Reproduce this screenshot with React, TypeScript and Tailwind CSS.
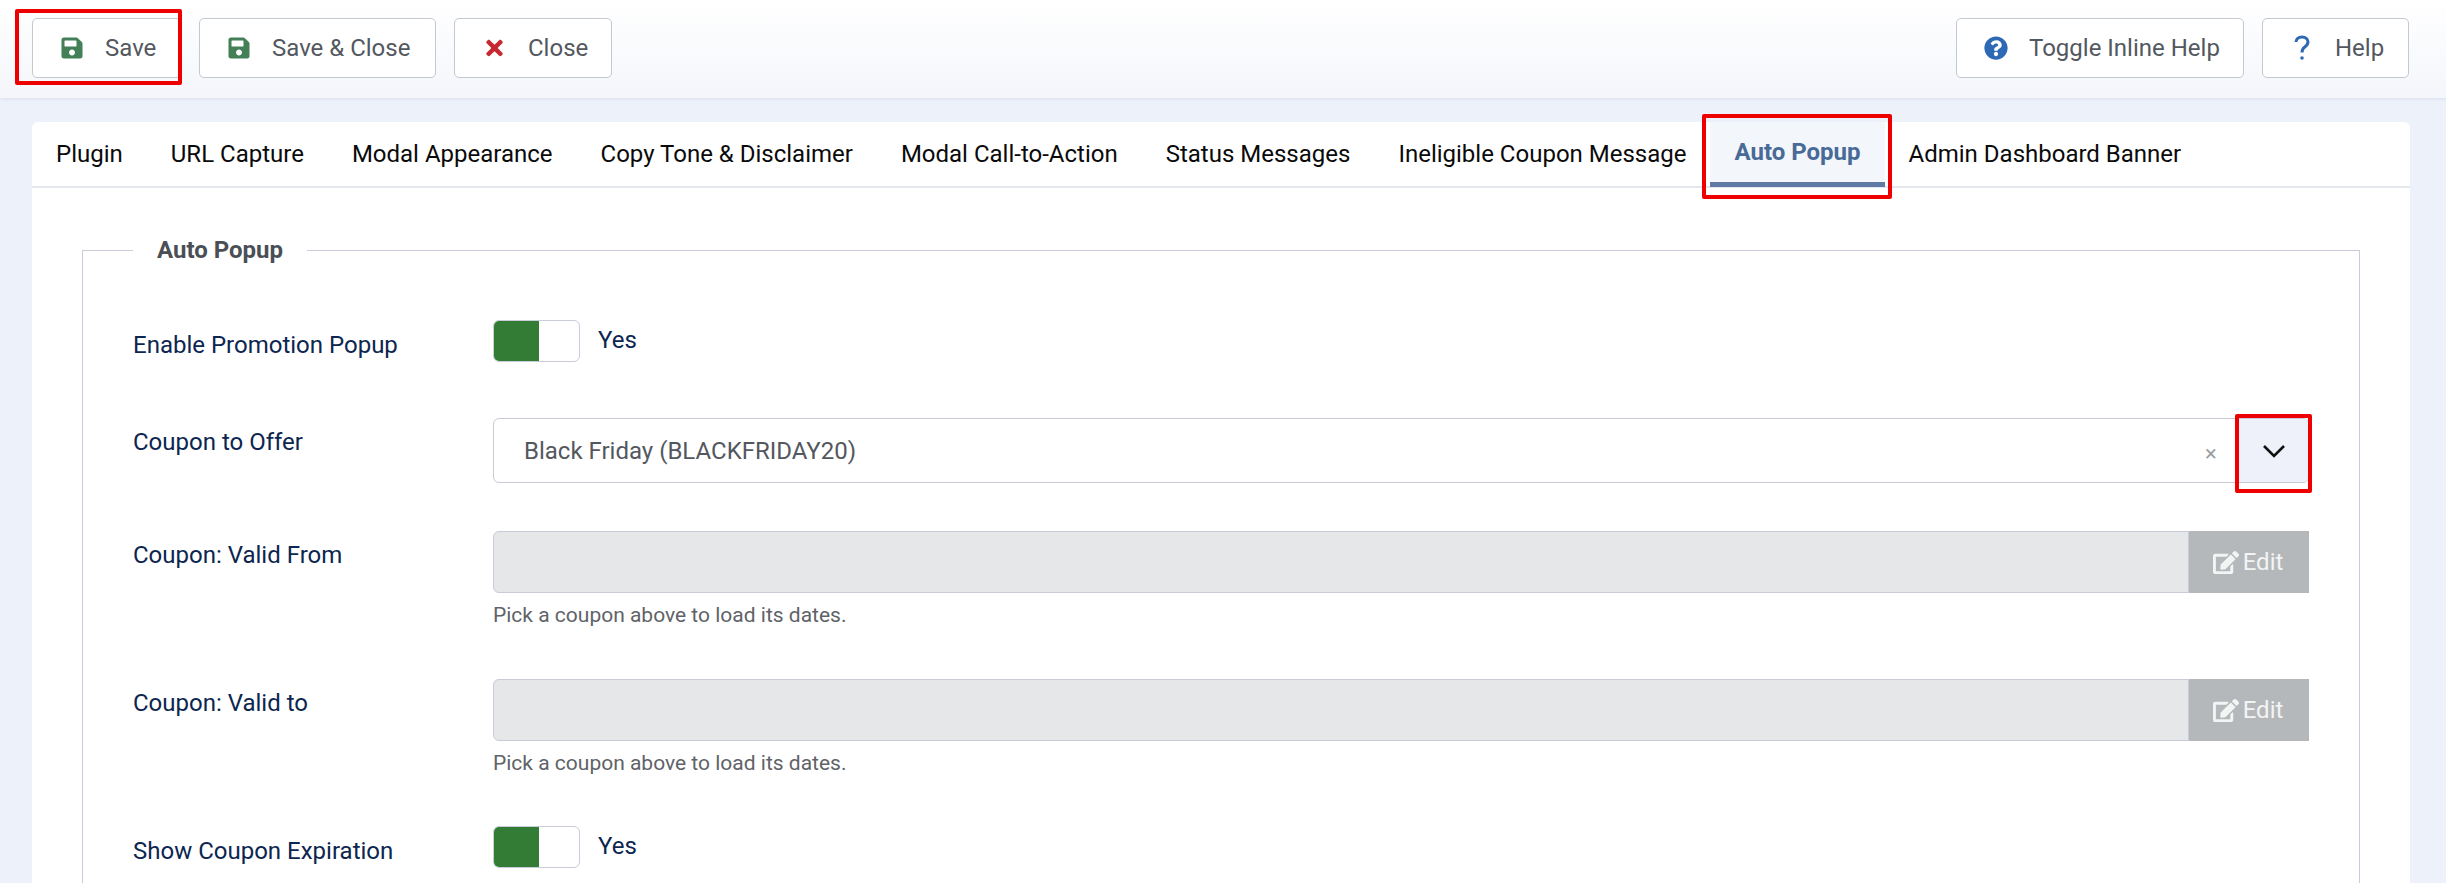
import { FaSave, FaTimes, FaQuestionCircle, FaEdit } from 'react-icons/fa';

const tabs = ['Plugin', 'URL Capture', 'Modal Appearance', 'Copy Tone & Disclaimer', 'Modal Call-to-Action', 'Status Messages', 'Ineligible Coupon Message', 'Auto Popup', 'Admin Dashboard Banner'];

function ToolButton({ icon, label, className }: { icon: React.ReactNode; label: string; className: string }) {
  return (
    <button className={`h-[60px] flex items-center border border-[#c4c8cf] rounded-[5px] bg-white text-[24px] text-[#53585f] ${className}`}>
      {icon}
      <span>{label}</span>
    </button>
  );
}

function Toggle() {
  return (
    <div className="flex items-start">
      <div className="w-[87px] h-[42px] flex rounded-[6px] border border-[#c8cdd9] bg-white overflow-hidden">
        <div className="w-[45px] h-full bg-[#337c36]" />
      </div>
      <span className="ml-[18px] text-[24px] leading-[40px] text-[#0c2650]">Yes</span>
    </div>
  );
}

function DateInput() {
  return (
    <div>
      <div className="flex h-[62px]">
        <div className="flex-1 bg-[#e6e7e8] border border-[#c8cbd6] rounded-l-[6px]" />
        <div className="w-[120px] bg-[#b5b8ba] flex items-center justify-center gap-[4px] pr-[2px] text-[24px] text-[#f3f4f4]">
          <FaEdit className="w-[26px] h-[25px]" />
          <span>Edit</span>
        </div>
      </div>
      <p className="mt-[9px] text-[21px] leading-[26px] text-[#5f6368]">Pick a coupon above to load its dates.</p>
    </div>
  );
}

export default function App() {
  return (
    <div className="h-[883px] overflow-hidden bg-[#edf1fa] font-['Roboto',sans-serif] relative">
      <header className="h-[98px] flex items-center justify-between pl-[32px] pr-[37px] pb-[2px] bg-gradient-to-b from-white to-[#f4f6fb] shadow-[0_1px_3px_rgba(200,208,225,0.5)]">
        <div className="flex gap-[18px]">
          <ToolButton className="w-[149px] pl-[28px] gap-[22px]" icon={<FaSave className="w-[22px] h-[24px] text-[#437f57]" />} label="Save" />
          <ToolButton className="w-[237px] pl-[28px] gap-[22px]" icon={<FaSave className="w-[22px] h-[24px] text-[#437f57]" />} label="Save & Close" />
          <ToolButton className="w-[158px] pl-[31px] gap-[25px]" icon={<FaTimes className="w-[17px] h-[24px] text-[#c5282f]" />} label="Close" />
        </div>
        <div className="flex gap-[18px]">
          <ToolButton className="w-[288px] pl-[27px] gap-[21px]" icon={<FaQuestionCircle className="w-[24px] h-[24px] text-[#2d69b5]" />} label="Toggle Inline Help" />
          <ToolButton
            className="w-[147px] pl-[31px] gap-[25px]"
            icon={
              <svg className="w-[16px] h-[26px]" viewBox="0 0 16 26" fill="none" stroke="#2d69b5" strokeWidth="3">
                <path d="M2 7c0-3 2.5-5 6-5s6 2 6 5c0 2.5-1.500 3.700-3.200 5C9 13.300 8 14.500 8 17.500" />
                <circle cx="8" cy="23" r="1.800" fill="#2d69b5" stroke="none" />
              </svg>
            }
            label="Help"
          />
        </div>
      </header>

      <main className="ml-[32px] mr-[36px] mt-[24px] bg-white rounded-t-[6px]">
        <nav className="h-[66px] flex border-b-2 border-[#e4e7ee] text-[24px] text-[#0a0a0a]">
          {tabs.map(t =>
            t === 'Auto Popup' ? (
              <div key={t} className="h-[65px] px-[24px] flex items-center justify-center font-bold text-[#476a97] bg-[#f3f6fb] border-b-[5px] border-[#6079a5]">{t}</div>
            ) : (
              <div key={t} className="px-[24px] flex items-center">{t}</div>
            )
          )}
        </nav>

        <div className="px-[50px] pt-[46px]">
          <fieldset className="border border-[#c8cbd9] px-[50px] pt-[54px]">
            <legend className="px-[24px] text-[24px] font-bold text-[#4a4f56] leading-[32px]">Auto Popup</legend>

            <div className="grid grid-cols-[360px_1fr] h-[98px]">
              <label className="pt-[9px] text-[24px] leading-[32px] text-[#0c2650]">Enable Promotion Popup</label>
              <Toggle />
            </div>

            <div className="grid grid-cols-[360px_1fr] h-[113px]">
              <label className="pt-[8px] text-[24px] leading-[32px] text-[#0c2650]">Coupon to Offer</label>
              <div className="h-[65px] flex border border-[#c8cbd6] rounded-[6px] overflow-hidden">
                <div className="flex-1 flex items-center pl-[30px] text-[24px] text-[#53585f]">Black Friday (BLACKFRIDAY20)</div>
                <div className="w-[34px] flex items-center text-[#9b9ea3] text-[22px] pt-[6px]">×</div>
                <div className="w-[69px] bg-[#eef1fa] flex items-center justify-center">
                  <svg className="w-[24px] h-[14px]" viewBox="0 0 24 14" fill="none" stroke="#111" strokeWidth="2.6"><path d="M2 2l10 10L22 2" /></svg>
                </div>
              </div>
            </div>

            <div className="grid grid-cols-[360px_1fr] h-[148px]">
              <label className="pt-[8px] text-[24px] leading-[32px] text-[#0c2650]">Coupon: Valid From</label>
              <DateInput />
            </div>

            <div className="grid grid-cols-[360px_1fr] h-[147px]">
              <label className="pt-[8px] text-[24px] leading-[32px] text-[#0c2650]">Coupon: Valid to</label>
              <DateInput />
            </div>

            <div className="grid grid-cols-[360px_1fr] h-[98px]">
              <label className="pt-[9px] text-[24px] leading-[32px] text-[#0c2650]">Show Coupon Expiration</label>
              <Toggle />
            </div>
          </fieldset>
        </div>
      </main>

      {/* red annotation boxes drawn over the screenshot */}
      <div className="absolute left-[15px] top-[9px] w-[167px] h-[76px] border-[4px] border-[#ee0000] rounded-[2px]" />
      <div className="absolute left-[1702px] top-[114px] w-[190px] h-[85px] border-[4px] border-[#ee0000] rounded-[2px]" />
      <div className="absolute left-[2235px] top-[414px] w-[77px] h-[79px] border-[4px] border-[#ee0000] rounded-[2px]" />
    </div>
  );
}
